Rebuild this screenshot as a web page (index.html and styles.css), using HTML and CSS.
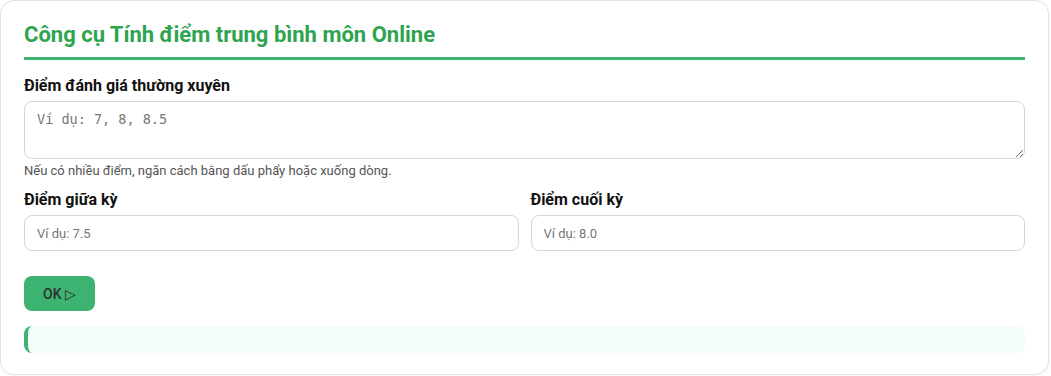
FILE: index.html
```html
<!DOCTYPE html>
<html lang="vi">
<head>
<meta charset="utf-8">
<title>Công cụ Tính điểm trung bình môn Online</title>
<link rel="stylesheet" href="styles.css">
</head>
<body>
<div class="card">
  <h1 class="title">Công cụ Tính điểm trung bình môn Online</h1>
  <div class="field">
    <label class="label" for="tx">Điểm đánh giá thường xuyên</label>
    <textarea id="tx" class="area" placeholder="Ví dụ: 7, 8, 8.5"></textarea>
    <div class="hint">Nếu có nhiều điểm, ngăn cách bằng dấu phẩy hoặc xuống dòng.</div>
  </div>
  <div class="row">
    <div class="col">
      <label class="label" for="gk">Điểm giữa kỳ</label>
      <input id="gk" class="input" type="text" placeholder="Ví dụ: 7.5">
    </div>
    <div class="col">
      <label class="label" for="ck">Điểm cuối kỳ</label>
      <input id="ck" class="input" type="text" placeholder="Ví dụ: 8.0">
    </div>
  </div>
  <button class="btn" type="button">OK ▷</button>
  <div class="result"></div>
</div>
</body>
</html>
```
FILE: styles.css
```css
* { box-sizing: border-box; }
html, body { margin: 0; padding: 0; background: #ffffff; }
body { font-family: Roboto, "Liberation Sans", Arial, sans-serif; color: #111; width: 1051px; height: 376px; overflow: hidden; }

.card {
  width: 1049px;
  height: 375px;
  border: 1px solid #e2e2e2;
  border-radius: 14px;
  padding: 20px 23px 20px 23px;
  background: #fff;
  box-shadow: 0 1px 4px rgba(0,0,0,0.04);
}

.title {
  margin: 0 0 16px;
  font-size: 22px;
  line-height: 28px;
  font-weight: 700;
  color: #2ea44f;
  padding-bottom: 8px;
  border-bottom: 3px solid #3cb371;
}

.field { display: flex; flex-direction: column; }

.label {
  display: block;
  font-size: 16px;
  line-height: 20px;
  font-weight: 700;
  color: #111;
  margin-bottom: 5px;
}

.area {
  display: block;
  width: 100%;
  height: 58px;
  border: 1px solid #d6d6d6;
  border-radius: 8px;
  padding: 9px 12px;
  font-family: "DejaVu Sans Mono", monospace;
  font-size: 13.5px;
  color: #333;
  resize: vertical;
  background: #fff;
}
.area::placeholder { color: #777; }

.hint {
  font-size: 13px;
  line-height: 16px;
  color: #555;
  margin-top: 4px;
}

.row {
  display: grid;
  grid-template-columns: 1fr 1fr;
  gap: 12px;
  margin-top: 11px;
}
.col { display: flex; flex-direction: column; }

.input {
  display: block;
  width: 100%;
  height: 36px;
  border: 1px solid #d6d6d6;
  border-radius: 8px;
  padding: 0 12px;
  font-family: Roboto, "Liberation Sans", sans-serif;
  font-size: 13px;
  color: #333;
  background: #fff;
}
.input::placeholder { color: #777; }

.btn {
  display: block;
  margin-top: 25px;
  width: 71px;
  height: 35px;
  border: none;
  border-radius: 8px;
  background: #3cb371;
  color: #2f2f2f;
  font-family: Roboto, "Liberation Sans", sans-serif;
  font-size: 14px;
  font-weight: 500;
  padding: 0;
}

.result {
  margin-top: 15px;
  height: 27px;
  border-left: 4px solid #3cb371;
  border-radius: 8px;
  background: #f3fcf6;
}
```
